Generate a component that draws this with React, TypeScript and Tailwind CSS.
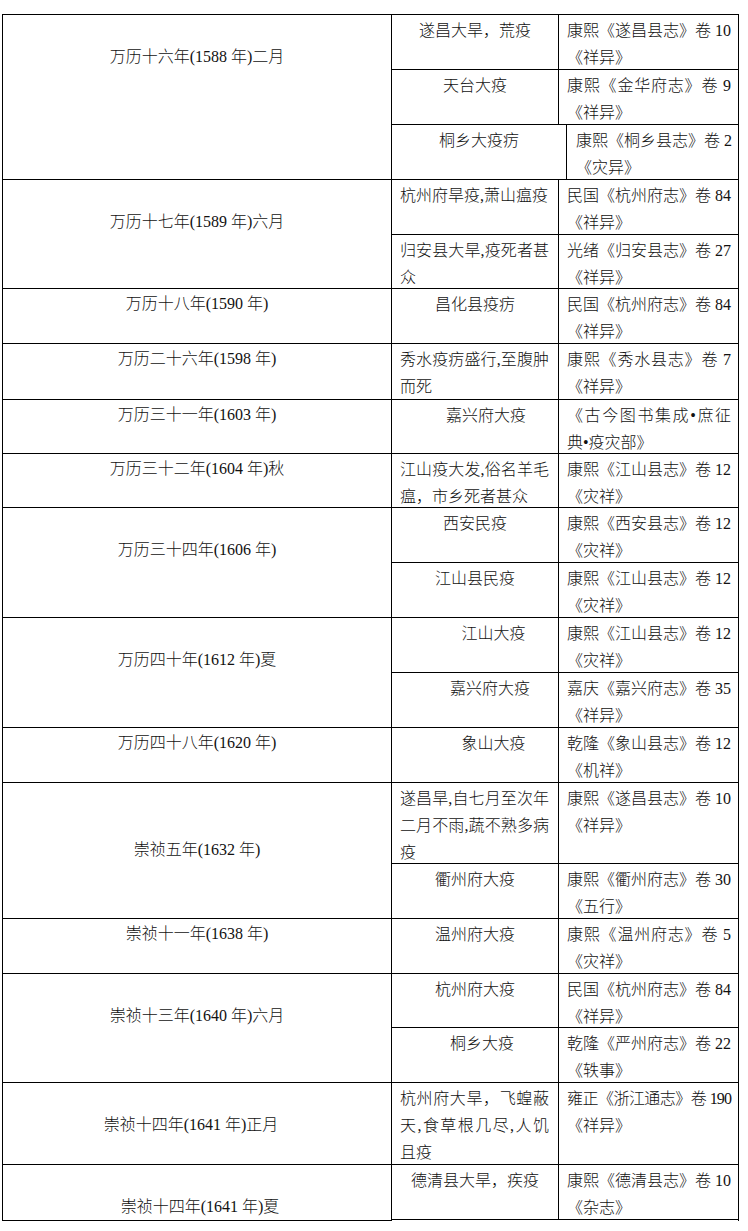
import React from "react";

type Sub = {
  c2: string[];
  c3: string[];
  h: string;
  c2Cls?: string;
  left?: boolean;
  wide?: boolean;
  tight?: boolean;
};

type Group = {
  year: string;
  yCls: string;
  subs: Sub[];
};

const groups: Group[] = [
  {
    year: "万历十六年(1588 年)二月",
    yCls: "pt-[28px]",
    subs: [
      { c2: ["遂昌大旱，荒疫"], c3: ["康熙《遂昌县志》卷 10", "《祥异》"], h: "h-[55px]" },
      { c2: ["天台大疫"], c3: ["康熙《金华府志》卷 9", "《祥异》"], h: "h-[55px]" },
      { c2: ["桐乡大疫疠"], c3: ["康熙《桐乡县志》卷 2", "《灾异》"], h: "h-[55px]", wide: true },
    ],
  },
  {
    year: "万历十七年(1589 年)六月",
    yCls: "pt-[28px]",
    subs: [
      { c2: ["杭州府旱疫,萧山瘟疫"], left: true, c3: ["民国《杭州府志》卷 84", "《祥异》"], h: "h-[55px]" },
      { c2: ["归安县大旱,疫死者甚", "众"], c3: ["光绪《归安县志》卷 27", "《祥异》"], h: "h-[54px]" },
    ],
  },
  {
    year: "万历十八年(1590 年)",
    yCls: "pt-[1px]",
    subs: [{ c2: ["昌化县疫疠"], c3: ["民国《杭州府志》卷 84", "《祥异》"], h: "h-[55px]" }],
  },
  {
    year: "万历二十六年(1598 年)",
    yCls: "pt-[1px]",
    subs: [{ c2: ["秀水疫疠盛行,至腹肿", "而死"], c3: ["康熙《秀水县志》卷 7", "《祥异》"], h: "h-[56px]" }],
  },
  {
    year: "万历三十一年(1603 年)",
    yCls: "pt-[1px]",
    subs: [
      { c2: ["嘉兴府大疫"], c2Cls: "pl-[30px] pr-[8px]", c3: ["《古今图书集成•庶征", "典•疫灾部》"], h: "h-[54px]" },
    ],
  },
  {
    year: "万历三十二年(1604 年)秋",
    yCls: "pt-[1px]",
    subs: [
      { c2: ["江山疫大发,俗名羊毛", "瘟，市乡死者甚众"], c3: ["康熙《江山县志》卷 12", "《灾祥》"], h: "h-[54px]" },
    ],
  },
  {
    year: "万历三十四年(1606 年)",
    yCls: "pt-[28px]",
    subs: [
      { c2: ["西安民疫"], c3: ["康熙《西安县志》卷 12", "《灾祥》"], h: "h-[55px]" },
      { c2: ["江山县民疫"], c3: ["康熙《江山县志》卷 12", "《灾祥》"], h: "h-[55px]" },
    ],
  },
  {
    year: "万历四十年(1612 年)夏",
    yCls: "pt-[28px]",
    subs: [
      { c2: ["江山大疫"], c2Cls: "pl-[45px] pr-[8px]", c3: ["康熙《江山县志》卷 12", "《灾祥》"], h: "h-[55px]" },
      { c2: ["嘉兴府大疫"], c2Cls: "pl-[38px] pr-[8px]", c3: ["嘉庆《嘉兴府志》卷 35", "《祥异》"], h: "h-[55px]" },
    ],
  },
  {
    year: "万历四十八年(1620 年)",
    yCls: "pt-[1px]",
    subs: [
      { c2: ["象山大疫"], c2Cls: "pl-[45px] pr-[8px]", c3: ["乾隆《象山县志》卷 12", "《机祥》"], h: "h-[55px]" },
    ],
  },
  {
    year: "崇祯五年(1632 年)",
    yCls: "pt-[53px]",
    subs: [
      {
        c2: ["遂昌旱,自七月至次年", "二月不雨,蔬不熟多病", "疫"],
        c3: ["康熙《遂昌县志》卷 10", "《祥异》"],
        h: "h-[81px]",
      },
      { c2: ["衢州府大疫"], c3: ["康熙《衢州府志》卷 30", "《五行》"], h: "h-[55px]" },
    ],
  },
  {
    year: "崇祯十一年(1638 年)",
    yCls: "pt-[1px]",
    subs: [{ c2: ["温州府大疫"], c3: ["康熙《温州府志》卷 5", "《灾祥》"], h: "h-[55px]" }],
  },
  {
    year: "崇祯十三年(1640 年)六月",
    yCls: "pt-[28px]",
    subs: [
      { c2: ["杭州府大疫"], c3: ["民国《杭州府志》卷 84", "《祥异》"], h: "h-[54px]" },
      { c2: ["桐乡大疫"], c2Cls: "pl-[22px] pr-[8px]", c3: ["乾隆《严州府志》卷 22", "《轶事》"], h: "h-[55px]" },
    ],
  },
  {
    year: "崇祯十四年(1641 年)正月",
    yCls: "pt-[28px] pr-[12px]",
    subs: [
      {
        c2: ["杭州府大旱，飞蝗蔽", "天,食草根几尽,人饥", "且疫"],
        c3: ["雍正《浙江通志》卷 190", "《祥异》"],
        h: "h-[82px]",
        tight: true,
      },
    ],
  },
  {
    year: "崇祯十四年(1641 年)夏",
    yCls: "pt-[28px] pl-[6px]",
    subs: [{ c2: ["德清县大旱，疾疫"], c3: ["康熙《德清县志》卷 10", "《杂志》"], h: "h-[55px]" }],
  },
];

function Lines({ lines, tight }: { lines: string[]; tight?: boolean }) {
  return (
    <>
      {lines.map((l, i) =>
        i < lines.length - 1 ? (
          <div
            key={i}
            className={`text-justify [text-align-last:justify] ${tight && i === 0 ? "tracking-[-0.9px]" : ""}`}
          >
            {l}
          </div>
        ) : (
          <div key={i} className="text-left">
            {l}
          </div>
        )
      )}
    </>
  );
}

function SubRow({ s }: { s: Sub }) {
  const centered = s.c2.length === 1 && !s.left;
  return (
    <div className={`flex border-b border-black ${s.h}`}>
      <div
        className={`shrink-0 border-r border-black pt-[2px] ${s.wide ? "w-[175px]" : "w-[167px]"} ${
          centered ? `text-center ${s.c2Cls ?? "px-[8px]"}` : "pl-[8px] pr-[9px]"
        }`}
      >
        {centered ? s.c2[0] : <Lines lines={s.c2} />}
      </div>
      <div className={`flex-1 pt-[2px] ${s.wide ? "pl-[9px] pr-[6px]" : "pl-[8px] pr-[7px]"}`}>
        <Lines lines={s.c3} tight={s.tight} />
      </div>
    </div>
  );
}

export default function App() {
  return (
    <div className="min-h-[1231px] bg-white pt-[14px] pl-[2px] font-['Liberation_Serif','Noto_Sans_CJK_SC',serif] text-[16px] font-light leading-[27px] text-[#111]">
      <div className="w-[737px] border-t border-l border-r border-black">
        {groups.map((g, gi) => (
          <div key={gi} className="flex">
            <div className={`w-[389px] shrink-0 border-r border-b border-black text-center ${g.yCls}`}>{g.year}</div>
            <div className="flex flex-1 flex-col">
              {g.subs.map((s, si) => (
                <SubRow key={si} s={s} />
              ))}
            </div>
          </div>
        ))}
      </div>
    </div>
  );
}
